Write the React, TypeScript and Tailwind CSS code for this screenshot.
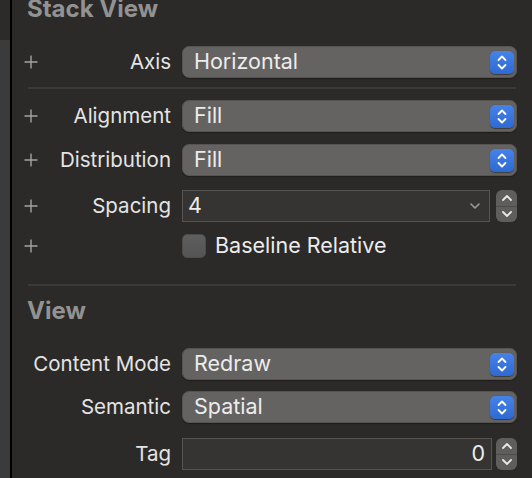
import React from "react";

const font = { fontFamily: "Inter, 'Noto Sans', sans-serif" };

function Plus() {
  return (
    <svg width="14" height="14" viewBox="0 0 14 14" className="block shrink-0">
      <path d="M7 0.5V13.5M0.5 7H13.5" stroke="#a3a3a3" strokeWidth="1.4" />
    </svg>
  );
}

function BlueStepper() {
  return (
    <div className="w-[24px] h-[23px] rounded-[5px] bg-gradient-to-b from-[#4682e8] to-[#2f69d2] flex items-center justify-center shadow-[0_0.5px_1px_rgba(0,0,0,0.4)]">
      <svg width="12" height="17" viewBox="0 0 12 17">
        <path d="M2.5 6L6 2.5L9.5 6M2.5 11L6 14.5L9.5 11" fill="none" stroke="#ffffff" strokeWidth="1.8" strokeLinecap="round" strokeLinejoin="round" />
      </svg>
    </div>
  );
}

function Popup({ value }: { value: string }) {
  return (
    <div className="w-[335px] h-[32px] rounded-[7px] bg-[#646362] border border-[#555453] flex items-center pl-[11px] pr-[2px] shadow-[0_1px_1px_rgba(0,0,0,0.3)]">
      <span className="flex-1 text-[21.5px] text-[#ececec] leading-none">{value}</span>
      <BlueStepper />
    </div>
  );
}

function GrayStepper() {
  return (
    <div className="w-[21px] h-[32px] rounded-[6px] bg-[#5f5e5d] flex flex-col overflow-hidden">
      <div className="flex-1 flex items-center justify-center border-b border-[#4c4b4a]">
        <svg width="12" height="8" viewBox="0 0 12 8">
          <path d="M2 6L6 2L10 6" fill="none" stroke="#e8e8e8" strokeWidth="1.8" strokeLinecap="round" strokeLinejoin="round" />
        </svg>
      </div>
      <div className="flex-1 flex items-center justify-center">
        <svg width="12" height="8" viewBox="0 0 12 8">
          <path d="M2 2L6 6L10 2" fill="none" stroke="#e8e8e8" strokeWidth="1.8" strokeLinecap="round" strokeLinejoin="round" />
        </svg>
      </div>
    </div>
  );
}

function Row({
  plus,
  label,
  children,
  className,
}: {
  plus?: boolean;
  label?: string;
  children: React.ReactNode;
  className?: string;
}) {
  return (
    <div className={"flex items-center h-[32px] " + (className ?? "")}>
      <div className="w-[159px] pl-[12px] flex items-center justify-between">
        {plus ? <Plus /> : <span />}
        <span className="text-[20.5px] text-[#e4e4e4] leading-none whitespace-nowrap">{label}</span>
      </div>
      <div className="ml-[11px] flex items-center">{children}</div>
    </div>
  );
}

function Separator({ className }: { className?: string }) {
  return <div className={"ml-[16px] w-[488px] h-[2px] bg-[#3b3a39] " + (className ?? "")} />;
}

export default function App() {
  return (
    <div className="w-[532px] h-[478px] flex bg-[#2b2a28] overflow-hidden" style={font}>
      <div className="w-[10px] flex flex-col">
        <div className="h-[40px] bg-[#2c2b2a]" />
        <div className="flex-1 bg-[#3b3b3b]" />
      </div>
      <div className="w-[2px] bg-black" />
      <div className="flex-1 flex flex-col">
        <div className="ml-[15px] -mt-[5px] h-[27px] text-[24px] leading-[27px] font-bold text-[#929292] whitespace-nowrap">
          Stack View
        </div>
        <Row plus label="Axis" className="mt-[24px]">
          <Popup value="Horizontal" />
        </Row>
        <Separator className="mt-[9px]" />
        <Row plus label="Alignment" className="mt-[11px]">
          <Popup value="Fill" />
        </Row>
        <Row plus label="Distribution" className="mt-[12px]">
          <Popup value="Fill" />
        </Row>
        <Row plus label="Spacing" className="mt-[14px]">
          <div className="flex items-center gap-[6px]">
            <div className="w-[308px] h-[32px] border border-[#555453] bg-[#353432] flex items-center pl-[5px] pr-[8px]">
              <span className="flex-1 text-[21.5px] text-[#ececec] leading-none">4</span>
              <svg width="12" height="8" viewBox="0 0 12 8">
                <path d="M2 2L6 6L10 2" fill="none" stroke="#9b9b9b" strokeWidth="1.6" strokeLinecap="round" strokeLinejoin="round" />
              </svg>
            </div>
            <GrayStepper />
          </div>
        </Row>
        <Row plus className="mt-[8px]">
          <div className="flex items-center gap-[9px]">
            <div className="w-[24px] h-[24px] rounded-[5px] bg-gradient-to-b from-[#5e5e5e] to-[#545454] border border-[#4c4c4c]" />
            <span className="text-[21.5px] text-[#ececec] leading-none">Baseline Relative</span>
          </div>
        </Row>
        <Separator className="mt-[22px]" />
        <div className="ml-[15px] mt-[11px] h-[27px] text-[24px] leading-[27px] font-bold text-[#929292]">
          View
        </div>
        <Row label="Content Mode" className="mt-[24px]">
          <Popup value="Redraw" />
        </Row>
        <Row label="Semantic" className="mt-[11px]">
          <Popup value="Spatial" />
        </Row>
        <Row label="Tag" className="mt-[15px]">
          <div className="flex items-center gap-[4px]">
            <div className="w-[310px] h-[32px] border border-[#555453] bg-[#353432] flex items-center justify-end pr-[6px]">
              <span className="text-[21.5px] text-[#ececec] leading-none">0</span>
            </div>
            <GrayStepper />
          </div>
        </Row>
      </div>
    </div>
  );
}
